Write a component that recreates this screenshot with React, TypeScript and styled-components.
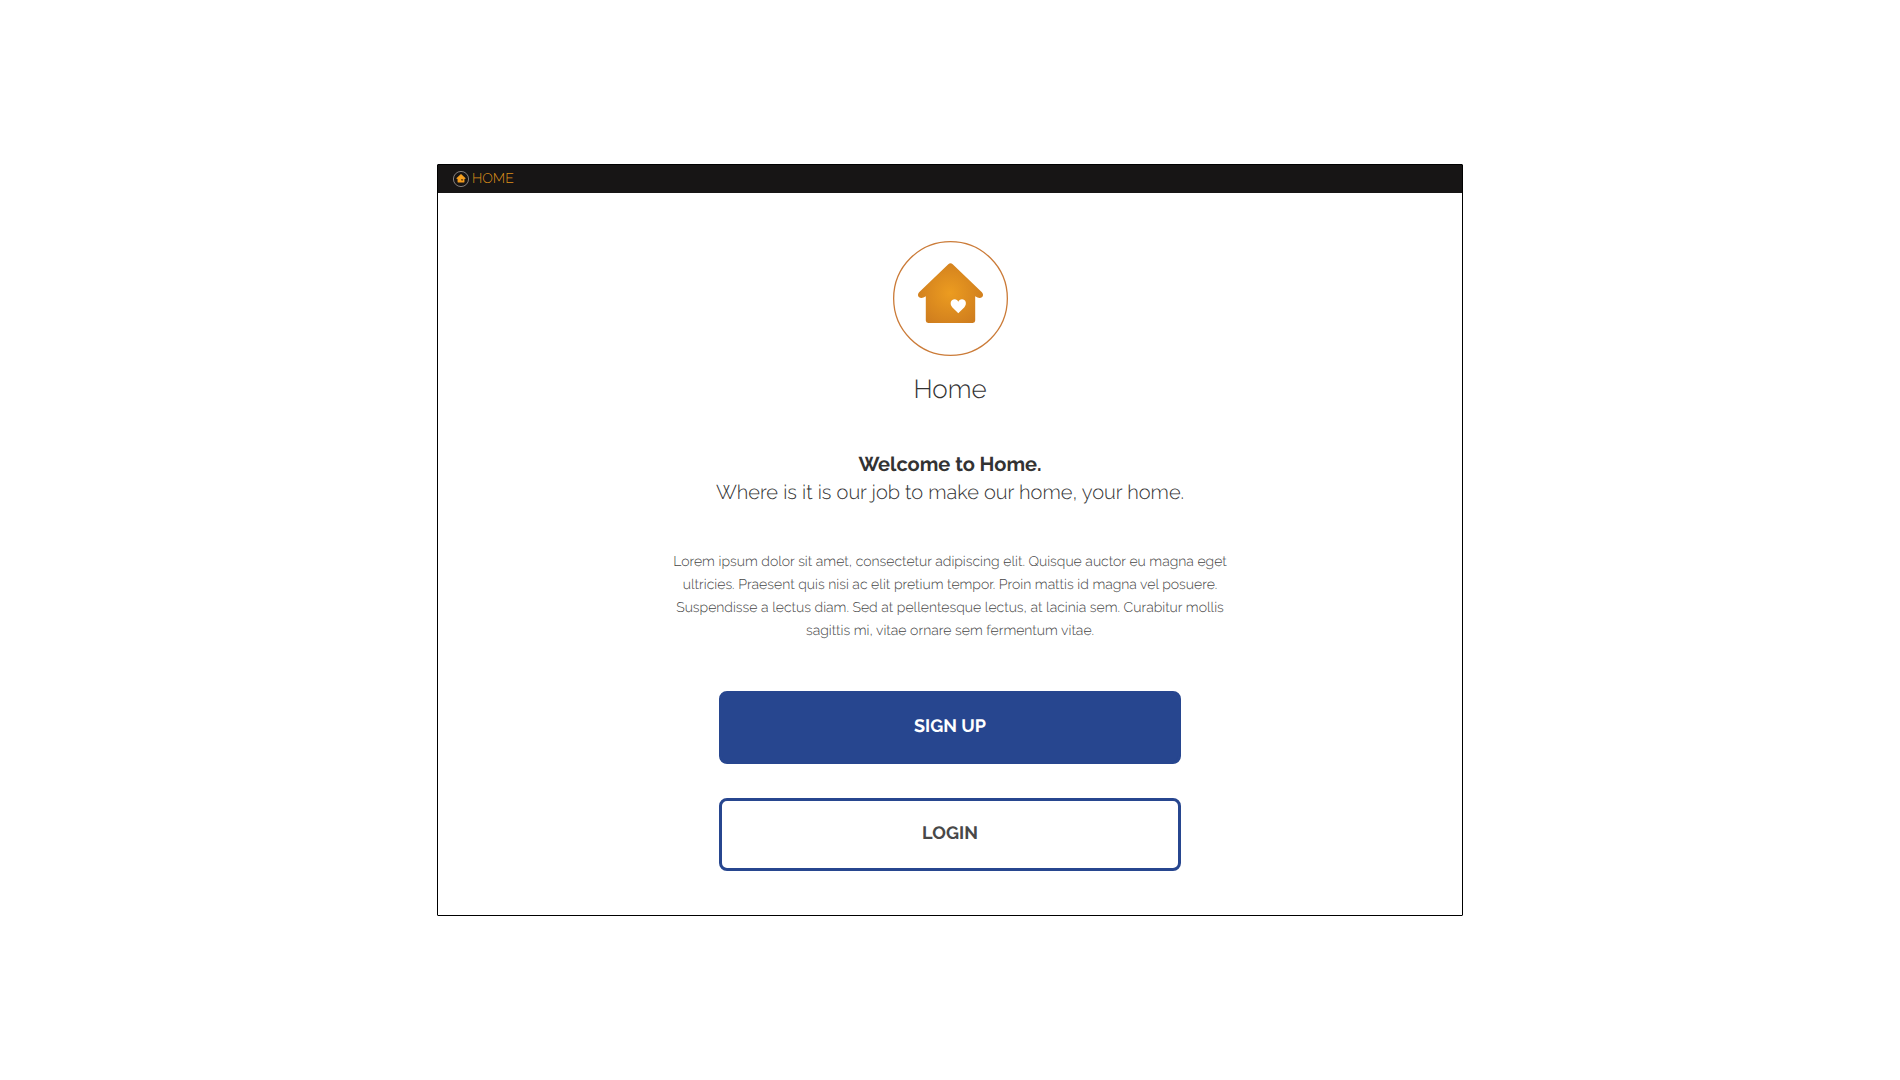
import React from "react";
import styled, { createGlobalStyle } from "styled-components";

const GlobalStyle = createGlobalStyle`
  *, *::before, *::after { box-sizing: border-box; }
  body {
    margin: 0;
    background: #ffffff;
    color: #333333;
    font-family: Raleway, Lato, "Open Sans", sans-serif;
    text-rendering: geometricPrecision;
  }
`;

const Page = styled.div`
  min-height: 100vh;
  display: grid;
  place-items: center;
`;

const Panel = styled.div`
  width: 54%;
  min-width: 620px;
  border: 1px solid #000000;
  border-radius: 1px;
  background: #ffffff;
`;

const TopBar = styled.header`
  display: flex;
  align-items: center;
  height: 28px;
  padding: 0 15px;
  background: #171515;
`;

const BrandLink = styled.a`
  display: flex;
  align-items: center;
  gap: 3px;
  color: #dd8f1a;
  font-size: 14px;
  font-weight: 300;
  line-height: 20px;
  text-decoration: none;
`;

const Content = styled.main`
  display: flex;
  flex-direction: column;
  align-items: center;
  padding: 48px 20px 44px;
  text-align: center;
`;

const Logo = styled.svg<{ $size: number }>`
  display: block;
  flex: none;
  width: ${(p) => p.$size}px;
  height: ${(p) => p.$size}px;
`;

const Title = styled.h1`
  margin: 18px 0 44px;
  font-size: 26px;
  font-weight: 300;
  line-height: 32px;
`;

const Lead = styled.p<{ $strong?: boolean }>`
  margin: 0;
  font-size: 20px;
  font-weight: ${(p) => (p.$strong ? 700 : 300)};
  line-height: 28px;
`;

const Description = styled.p`
  margin: 45px 0 48px;
  color: #444444;
  font-size: 14px;
  font-weight: 300;
  line-height: 23px;
`;

const Actions = styled.div`
  display: flex;
  flex-direction: column;
  gap: 34px;
  width: 47%;
`;

const ActionButton = styled.button<{ $primary?: boolean }>`
  height: 73px;
  padding: 0 0 2px;
  border: 3px solid #27468f;
  border-radius: 8px;
  background: ${(p) => (p.$primary ? "#27468f" : "#ffffff")};
  color: ${(p) => (p.$primary ? "#ffffff" : "#484848")};
  font-family: inherit;
  font-size: 18px;
  font-weight: 700;
  text-rendering: inherit;
  cursor: pointer;
`;

interface HouseLogoProps {
  id: string;
  size: number;
  ring: string;
  ringWidth: number;
  inner: string;
  outer: string;
  heart: string;
}

function HouseLogo({ id, size, ring, ringWidth, inner, outer, heart }: HouseLogoProps) {
  return (
    <Logo $size={size} viewBox="0 0 115 115" aria-hidden="true">
      <defs>
        <radialGradient id={id} gradientUnits="userSpaceOnUse" cx="57" cy="52" r="40">
          <stop offset="0" stopColor={inner} />
          <stop offset="1" stopColor={outer} />
        </radialGradient>
      </defs>
      <circle cx="57.5" cy="57.5" r={57.5 - ringWidth / 2} fill="none" stroke={ring} strokeWidth={ringWidth} />
      <path
        fill={`url(#${id})`}
        d="M55.3 23.2Q57.5 21.4 59.7 23.2L88.9 51.2Q91 53.8 89.2 56Q86.4 58.2 82.2 55.2V79.6Q82.2 82 79.8 82H35.2Q32.8 82 32.8 79.6V55.2Q28.6 58.2 25.8 56Q24 53.8 26.1 51.2Z"
      />
      <path
        fill={heart}
        d="M65.3 72.2L59.2 66.2C56.2 62.6 58 58.3 61.6 58.3C63.4 58.3 64.7 59.3 65.3 60.8C65.9 59.3 67.2 58.3 69 58.3C72.6 58.3 74.4 62.6 71.4 66.2Z"
      />
    </Logo>
  );
}

export default function App() {
  return (
    <>
      <GlobalStyle />
      <Page>
        <Panel>
          <TopBar>
            <BrandLink href="#">
              <HouseLogo
                id="bar-logo-fill"
                size={16}
                ring="#9a9491"
                ringWidth={6}
                inner="#f8a31f"
                outer="#ee971d"
                heart="#6b4312"
              />
              HOME
            </BrandLink>
          </TopBar>
          <Content>
            <HouseLogo
              id="main-logo-fill"
              size={115}
              ring="#cb7b38"
              ringWidth={1.3}
              inner="#ec9c20"
              outer="#cc7a1e"
              heart="#ffffff"
            />
            <Title>Home</Title>
            <Lead $strong>Welcome to Home.</Lead>
            <Lead>Where is it is our job to make our home, your home.</Lead>
            <Description>
              Lorem ipsum dolor sit amet, consectetur adipiscing elit. Quisque auctor eu magna eget
              <br />
              ultricies. Praesent quis nisi ac elit pretium tempor. Proin mattis id magna vel posuere.
              <br />
              Suspendisse a lectus diam. Sed at pellentesque lectus, at lacinia sem. Curabitur mollis
              <br />
              sagittis mi, vitae ornare sem fermentum vitae.
            </Description>
            <Actions>
              <ActionButton type="button" $primary>SIGN UP</ActionButton>
              <ActionButton type="button">LOGIN</ActionButton>
            </Actions>
          </Content>
        </Panel>
      </Page>
    </>
  );
}
